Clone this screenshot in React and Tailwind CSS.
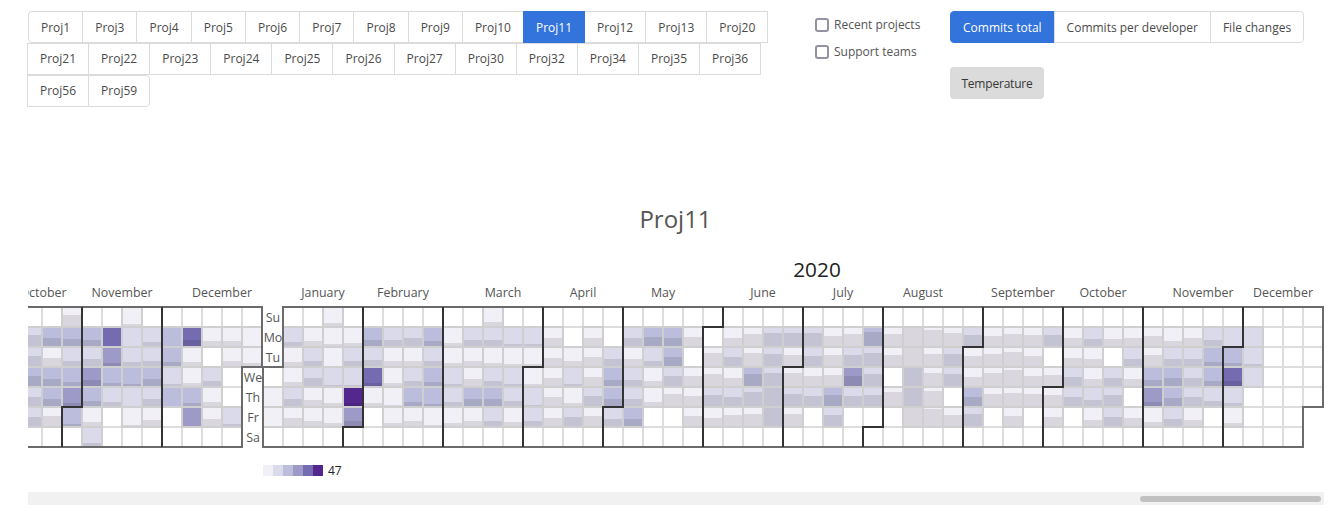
const FONT = "font-['Open_Sans',sans-serif]";

const row1 = ["Proj1", "Proj3", "Proj4", "Proj5", "Proj6", "Proj7", "Proj8", "Proj9", "Proj10", "Proj11", "Proj12", "Proj13", "Proj20"];
const row2 = ["Proj21", "Proj22", "Proj23", "Proj24", "Proj25", "Proj26", "Proj27", "Proj30", "Proj32", "Proj34", "Proj35", "Proj36"];
const row3 = ["Proj56", "Proj59"];
const modes = ["Commits total", "Commits per developer", "File changes"];

const COLORS = ["#ffffff", "#f2f0f7", "#dadaeb", "#bcbddc", "#9e9ac8", "#756bb1", "#54278f"];

// every column is Su..Sa, "level-overlay height", 0 means no commits
const weeks2019 = [
  ["0", "2-11", "2-10", "3-10", "2-9", "2-9", "0"],
  ["0", "3-8", "1-8", "3-7", "3-7", "1-10", "0"],
  ["1-11", "3-7", "2-5", "3-4", "4-3", "3-2", "0"],
  ["0", "3-6", "2-7", "4-6", "3-5", "1-4", "2-3"],
  ["0", "5-0", "4-3", "3-3", "2-4", "0", "0"],
  ["1-2", "2-0", "2-4", "3-2", "2-0", "1-1", "0"],
  ["0", "2-4", "2-5", "3-7", "2-7", "1-6", "0"],
  ["0", "3-0", "3-4", "2-2", "3-0", "0", "0"],
  ["0", "5-6", "1-4", "1-3", "3-3", "4-0", "0"],
  ["0", "1-5", "0", "2-5", "1-4", "1-7", "0"],
  ["0", "1-5", "1-5", "0", "0", "2-2", "0"],
  ["0", "1-0", "1-3"],
];
const weeks2020 = [
  ["", "", "", "0", "1-0", "1-0", "0"],
  ["0", "2-4", "1-4", "1-4", "2-7", "1-8", "0"],
  ["0", "1-5", "2-5", "2-8", "1-6", "1-5", "0"],
  ["1-3", "1-2", "1-0", "2-1", "1-3", "1-3", "0"],
  ["0", "1-3", "2-5", "2-1", "6-3", "4-5", "0"],
  ["0", "3-6", "2-6", "5-3", "1-3", "0", "0"],
  ["0", "2-6", "1-5", "1-3", "1-1", "1-3", "0"],
  ["0", "2-8", "1-5", "2-5", "3-4", "1-5", "0"],
  ["0", "3-5", "2-5", "3-4", "3-2", "1-1", "0"],
  ["0", "1-3", "1-3", "2-2", "2-4", "1-3", "0"],
  ["0", "2-6", "1-5", "1-7", "3-7", "1-5", "0"],
  ["1-4", "2-6", "1-3", "2-5", "3-7", "2-5", "0"],
  ["0", "2-2", "1-2", "2-2", "2-5", "1-4", "0"],
  ["0", "2-2", "1-2", "1-2", "2-1", "2-5", "0"],
  ["0", "1-8", "1-8", "1-8", "1-9", "1-8", "0"],
  ["0", "0", "1-5", "2-2", "1-3", "2-9", "0"],
  ["0", "1-8", "1-9", "1-9", "2-10", "1-10", "0"],
  ["0", "0", "2-7", "3-6", "3-7", "2-7", "0"],
  ["0", "2-8", "1-7", "2-6", "2-7", "3-7", "0"],
  ["0", "3-9", "2-5", "1-5", "1-4", "0", "0"],
  ["0", "3-8", "3-9", "2-10", "1-12", "0", "0"],
  ["0", "1-9", "0", "1-10", "1-10", "1-10", "0"],
  ["0", "0", "1-13", "1-12", "2-11", "1-8", "0"],
  ["0", "1-8", "2-9", "1-8", "2-9", "1-11", "0"],
  ["0", "1-12", "1-13", "3-12", "2-14", "1-12", "0"],
  ["0", "2-13", "2-12", "2-13", "2-18", "2-18", "0"],
  ["0", "2-13", "1-11", "1-13", "2-12", "1-12", "0"],
  ["0", "2-13", "2-10", "1-10", "2-10", "0", "0"],
  ["0", "1-10", "1-11", "1-11", "3-11", "2-11", "0"],
  ["0", "1-12", "2-11", "4-10", "2-10", "0", "0"],
  ["0", "3-14", "2-13", "2-12", "2-11", "0", "0"],
  ["0", "1-12", "1-11", "0", "1-14", "0", "0"],
  ["0", "1-20", "1-20", "2-20", "2-20", "1-20", "0"],
  ["0", "1-16", "1-12", "1-13", "1-15", "1-17", "0"],
  ["0", "1-13", "2-12", "2-12", "0", "1-11", "0"],
  ["0", "2-11", "1-10", "1-9", "3-9", "2-12", "0"],
  ["0", "1-10", "1-12", "1-13", "1-12", "0", "0"],
  ["0", "1-12", "1-14", "1-16", "1-13", "1-10", "0"],
  ["0", "1-11", "1-10", "1-10", "1-12", "0", "0"],
  ["0", "2-11", "0", "1-11", "1-11", "1-9", "0"],
  ["0", "1-8", "1-8", "2-9", "2-9", "0", "0"],
  ["0", "2-7", "1-7", "1-7", "2-6", "1-6", "0"],
  ["0", "1-7", "0", "2-8", "2-11", "2-9", "0"],
  ["0", "1-8", "2-7", "1-7", "0", "1-8", "0"],
  ["0", "1-10", "1-11", "3-6", "4-4", "1-4", "0"],
  ["0", "1-5", "2-7", "3-8", "3-8", "2-7", "0"],
  ["0", "1-8", "2-7", "2-8", "2-9", "1-6", "0"],
  ["0", "2-6", "3-4", "3-5", "2-5", "0", "0"],
  ["0", "2-0", "3-3", "5-5", "2-3", "1-3", "0"],
  ["0", "2-0", "2-2", "2-0", "0", "0", "0"],
  ["0", "0", "0", "0", "0", "0", "0"],
  ["0", "0", "0", "0", "0", "0", "0"],
  ["0", "0", "0", "0", "", "", ""],
];

const CELL = 20;
const TOP = 307;
const X_2019 = -798;
const X_2020 = 263;

const months = [
  { name: "October", x: 43 },
  { name: "November", x: 122 },
  { name: "December", x: 222 },
  { name: "January", x: 323 },
  { name: "February", x: 403 },
  { name: "March", x: 503 },
  { name: "April", x: 583 },
  { name: "May", x: 663 },
  { name: "June", x: 763 },
  { name: "July", x: 843 },
  { name: "August", x: 923 },
  { name: "September", x: 1023 },
  { name: "October", x: 1103 },
  { name: "November", x: 1203 },
  { name: "December", x: 1283 },
];

// dark step line between two months, worked out from the date
const monthPath = (year, month, x0) => {
  const first = new Date(Date.UTC(year, month, 1));
  const jan1 = new Date(Date.UTC(year, 0, 1));
  const dayIdx = (first - jan1) / 86400000;
  const col = Math.floor((dayIdx + jan1.getUTCDay()) / 7);
  const row = first.getUTCDay();
  const x = x0 + col * CELL;
  if (row === 0) return `M${x} ${TOP}V${TOP + 140}`;
  return `M${x + CELL} ${TOP}V${TOP + row * CELL}H${x}V${TOP + 140}`;
};

const Cell = ({ x, row, value }) => {
  const [level, overlay = 0] = value.split("-").map(Number);
  const y = TOP + row * CELL;
  if (level === 0) return <rect x={x} y={y} width={CELL} height={CELL} fill="#fff" stroke="#ddd" strokeWidth="2" />;
  const h = Math.min(overlay, 18);
  return (
    <g>
      <rect x={x} y={y} width={CELL} height={CELL} fill={COLORS[level]} stroke="#cfcfcf" strokeWidth="2" />
      {h > 0 && <rect x={x + 1} y={y + CELL - 1 - h} width={18} height={h} fill="#000" fillOpacity="0.1" />}
    </g>
  );
};

const Heatmap = () => {
  const cols = [];
  weeks2019.forEach((col, i) => cols.push({ x: 22 + i * CELL, col }));
  weeks2020.forEach((col, i) => cols.push({ x: X_2020 + i * CELL, col }));

  // empty cells first so the filled ones sit on top of their lines
  const empties = [];
  const filled = [];
  cols.forEach(({ x, col }) =>
    col.forEach((value, row) => {
      if (value === "0") empties.push(<Cell key={`${x}-${row}`} x={x} row={row} value={value} />);
      else if (value) filled.push(<Cell key={`${x}-${row}`} x={x} row={row} value={value} />);
    })
  );

  return (
    <svg width="1296" height="230" viewBox="28 255 1296 230" className="block">
      {empties}
      {filled}
      <path d="M0 307H262V367H242V447H0" fill="none" stroke="#6b6b6b" strokeWidth="2" />
      <path d="M283 307H1323V407H1303V447H263V367H283Z" fill="none" stroke="#6b6b6b" strokeWidth="2" />
      {[10, 11].map((m) => (
        <path key={m} d={monthPath(2019, m, X_2019)} fill="none" stroke="#333" strokeWidth="2" />
      ))}
      {[1, 2, 3, 4, 5, 6, 7, 8, 9, 10, 11].map((m) => (
        <path key={m} d={monthPath(2020, m, X_2020)} fill="none" stroke="#333" strokeWidth="2" />
      ))}
      <g fontFamily="'Open Sans', sans-serif" fontSize="12.4" fill="#555" textAnchor="middle">
        {months.map((m) => (
          <text key={m.x} x={m.x} y="297">
            {m.name}
          </text>
        ))}
        <text x="273" y="322">Su</text>
        <text x="273" y="342">Mo</text>
        <text x="273" y="362">Tu</text>
        <text x="253" y="382">We</text>
        <text x="253" y="402">Th</text>
        <text x="253" y="422">Fr</text>
        <text x="253" y="442">Sa</text>
      </g>
      <text x="817" y="277" fontFamily="'Open Sans', sans-serif" fontSize="20.8" fill="#222" textAnchor="middle">
        2020
      </text>
      {COLORS.slice(1).map((c, i) => (
        <rect key={c} x={263 + i * 10} y="465" width="10" height="11" fill={c} />
      ))}
      <text x="328" y="475" fontFamily="'Open Sans', sans-serif" fontSize="12" fill="#222">
        47
      </text>
    </svg>
  );
};

const ProjButton = ({ name, className }) => (
  <button
    className={`h-8 px-3 -mr-px border text-xs ${
      name === "Proj11" ? "bg-[#3273dc] border-[#3273dc] text-white relative" : "bg-white border-[#dbdbdb] text-[#4a4a4a]"
    } ${className || ""}`}
  >
    {name}
  </button>
);

const Check = ({ label }) => (
  <label className="flex items-center gap-[5px] h-[27px] text-xs text-[#555]">
    <span className="w-[14px] h-[14px] rounded-[3px] border-2 border-[#9592a4] bg-white" />
    {label}
  </label>
);

const App = () => {
  return (
    <div className={`${FONT} w-[1336px] h-[516px] bg-white overflow-hidden`}>
      <div className="flex h-[172px] pt-[11px] pl-[28px]">
        <div className="w-[787px]">
          <div className="flex">
            {row1.map((p, i) => (
              <ProjButton key={p} name={p} className={`pt-px ${i === 0 ? "rounded-l" : ""}`} />
            ))}
          </div>
          <div className="flex -ml-px">
            {row2.map((p) => (
              <ProjButton key={p} name={p} />
            ))}
          </div>
          <div className="flex -ml-px">
            {row3.map((p, i) => (
              <ProjButton key={p} name={p} className={i === 1 ? "rounded-r" : ""} />
            ))}
          </div>
        </div>
        <div className="w-[135px]">
          <Check label="Recent projects" />
          <Check label="Support teams" />
        </div>
        <div>
          <div className="flex">
            {modes.map((m, i) => (
              <button
                key={m}
                className={`h-8 px-3 pt-px -mr-px border text-xs ${
                  i === 0
                    ? "bg-[#3273dc] border-[#3273dc] text-white rounded-l"
                    : "bg-white border-[#dbdbdb] text-[#4a4a4a]"
                } ${i === 2 ? "rounded-r" : ""}`}
              >
                {m}
              </button>
            ))}
          </div>
          <button className="mt-6 w-[94px] h-8 pt-px rounded bg-[#dbdbdb] text-xs tracking-[-0.2px] text-[#363636]">Temperature</button>
        </div>
      </div>
      <h1 className="h-[83px] pt-[31px] pl-[15px] text-center text-2xl leading-8 text-[#555]">Proj11</h1>
      <div className="ml-[28px] w-[1296px]">
        <Heatmap />
        <div className="mt-[7px] h-[13px] bg-[#f1f1f1] flex justify-end items-center pr-[3px]">
          <div className="w-[181px] h-[6px] rounded-full bg-[#c1c1c1]" />
        </div>
      </div>
    </div>
  );
};

export default App;
